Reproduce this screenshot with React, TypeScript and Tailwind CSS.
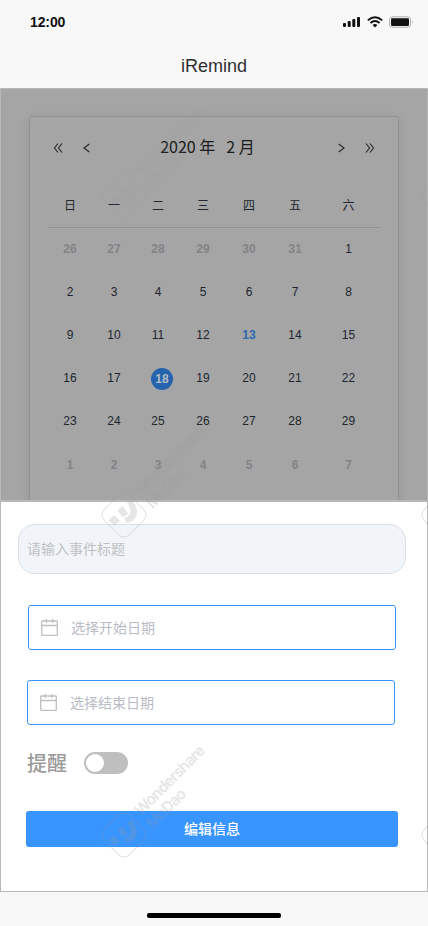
import React from "react";

const font = "font-['Liberation_Sans','Noto_Sans_CJK_SC',sans-serif]";

const weekdays = ["日", "一", "二", "三", "四", "五", "六"];
const weeks = [
  [26, 27, 28, 29, 30, 31, 1],
  [2, 3, 4, 5, 6, 7, 8],
  [9, 10, 11, 12, 13, 14, 15],
  [16, 17, 18, 19, 20, 21, 22],
  [23, 24, 25, 26, 27, 28, 29],
  [1, 2, 3, 4, 5, 6, 7],
];

function StatusBar() {
  return (
    <div className="flex h-11 items-center justify-between pr-[14px] pl-[30px] text-[#111]">
      <span className="text-sm leading-none font-bold tracking-[-0.1px]">12:00</span>
      <svg width="71" height="12" viewBox="0 0 71 12" fill="#111">
        <rect x="0" y="7" width="3" height="4" rx="1" />
        <rect x="4.7" y="5" width="3" height="6" rx="1" />
        <rect x="9.3" y="3" width="3" height="8" rx="1" />
        <rect x="14" y="1" width="3" height="10" rx="1" />
        <g fill="none" stroke="#111" strokeWidth="1.8">
          <path d="M24.8 4.4Q32 -2 39.2 4.4" />
          <path d="M27.4 7Q32 3 36.6 7" />
        </g>
        <path d="M29.6 9Q32 7.2 34.4 9L32 11.4Z" />
        <rect x="46.5" y="0.9" width="21" height="10.4" rx="2.5" fill="none" stroke="#b0b0b0" />
        <rect x="48" y="2.3" width="18" height="7.6" rx="1.2" />
        <path d="M69 4.5Q70.5 6 69 7.8Z" fill="#999" />
      </svg>
    </div>
  );
}

function Chevron({ double = false, flip = false }: { double?: boolean; flip?: boolean }) {
  return (
    <svg
      width="10"
      height="10"
      viewBox="0 0 10 10"
      className={flip ? "-scale-x-100" : ""}
      fill="none"
      stroke="#28292b"
      strokeWidth="1.15"
    >
      {double ? <path d="M5 .5L1.5 5L5 9.5M9 .5L5.500 5L9 9.5" /> : <path d="M7.3 1L2 5L7.3 9" />}
    </svg>
  );
}

function dayClass(week: number, day: number) {
  if ((week === 0 && day > 20) || week === 5) return "text-[#828387] font-bold";
  if (week === 2 && day === 13) return "text-[#2c69ae] font-bold";
  return "text-[#20252e]";
}

function Calendar() {
  return (
    <div className="mx-[28px] mt-[27px] h-[400px] rounded-[3px] border border-[#919295] px-[18px] shadow-[0_2px_10px_rgba(0,0,0,0.1)]">
      <div className="flex h-[61px] items-center pr-[5px] pl-[5px]">
        <Chevron double />
        <span className="ml-[19px] flex"><Chevron /></span>
        <div className="flex flex-1 justify-center gap-[11px] pr-[13px] pb-[3px] font-['Noto_Sans_CJK_SC',sans-serif] text-base text-[#1b1b1b]">
          <span>2020 年</span>
          <span>2 月</span>
        </div>
        <span className="mr-[19px] flex"><Chevron flip /></span>
        <Chevron double flip />
      </div>
      <div className="mt-[7px] mb-[-1px] grid h-[43px] grid-cols-[44px_44px_44px_46px_46px_46px_61px] items-center border-b border-[#919295] text-center text-xs text-[#20252e]">
        {weekdays.map((d) => <span key={d}>{d}</span>)}
      </div>
      {weeks.map((days, w) => (
        <div key={w} className="grid h-[43.2px] grid-cols-[44px_44px_44px_46px_46px_46px_61px] items-center text-center text-xs">
          {days.map((d) =>
            w === 3 && d === 18 ? (
              <span key={d} className="mt-[2px] ml-[15px] flex size-[22px] items-center justify-center rounded-full bg-[#2563ac] font-bold text-[#b5bcc6]">18</span>
            ) : (
              <span key={d} className={dayClass(w, d)}>{d}</span>
            ),
          )}
        </div>
      ))}
    </div>
  );
}

function DateField({ text }: { text: string }) {
  return (
    <div className="flex h-[45px] w-[368px] items-center rounded-[3px] border border-[#3894ff] pl-3 text-sm text-[#b9bcc5]">
      <svg width="17" height="17" viewBox="0 0 17 17" fill="none" stroke="#c0c0c0" strokeWidth="1.3">
        <rect x="0.7" y="2" width="15.6" height="14.3" rx="0.6" />
        <path d="M1 6.5H16M5.3 0V4M11.7 0V4" />
      </svg>
      <span className="ml-[13px]">{text}</span>
    </div>
  );
}

function Watermark({ label = true }: { label?: boolean }) {
  return (
    <svg width="112" height="124" viewBox="0 0 112 124" className="overflow-visible">
      <g opacity="0.24" fill="#999">
        <rect x="8.2" y="77.2" width="35.6" height="35.6" rx="8" fill="none" stroke="#999" strokeWidth="1.1" transform="rotate(45 26 95)" />
        <path d="M10.5 100.5L16 95L22 101L16.500 105.5Z M19.5 90.5L24.5 86L30 93.5L25 97.5Z M29 82L34 80Q39.5 87 39 93Q38 102 28 103L26.500 98Q37 95 29 82Z" />
        {label && (
          <g fontSize="15.5" fontWeight="600" fontFamily="Inter, sans-serif">
            <text transform="translate(43 76.5) rotate(-45)" textLength="92">Wondershare</text>
            <text transform="translate(54.5 89.5) rotate(-45)" textLength="49">MoDao</text>
          </g>
        )}
      </g>
    </svg>
  );
}

export default function App() {
  return (
    <div className={`relative flex h-[926px] w-full flex-col overflow-hidden bg-[#f8f8f8] ${font}`}>
      <StatusBar />
      <h1 className="flex h-11 items-center justify-center text-lg text-[#303030]">iRemind</h1>
      <section className="h-[413px] overflow-hidden border border-[#b8b8b8] bg-[#a5a5a5]">
        <Calendar />
      </section>
      <section className="h-[391px] border border-[#b8b8b8] bg-white">
        <div className="mt-[22px] ml-[17px] flex h-[50px] w-[388px] items-center rounded-[17px] border border-[#d9dfe8] bg-[#f1f5f9] pl-2 text-sm text-[#bfc0c3]">
          请输入事件标题
        </div>
        <div className="mt-[31px] ml-[27px]"><DateField text="选择开始日期" /></div>
        <div className="mt-[30px] ml-[26px]"><DateField text="选择结束日期" /></div>
        <div className="mt-[23px] ml-[26px] flex h-[30px] items-center text-xl text-[#9b9b9b]">
          <span className="pt-0.5 font-medium">提醒</span>
          <span className="ml-[17px] flex h-[22px] w-11 items-center rounded-full bg-[#bfbfbf] pl-0.5">
            <span className="size-[18px] rounded-full bg-white" />
          </span>
        </div>
        <button className="mt-[33px] ml-[25px] flex h-9 w-[372px] items-center justify-center rounded-[3px] bg-[#3894ff] text-sm font-medium text-white">
          编辑信息
        </button>
      </section>
      <footer className="flex flex-1 justify-center pt-[21px]">
        <div className="h-[5px] w-[134px] rounded-[2px] bg-black" />
      </footer>
      <div className="pointer-events-none absolute top-[100px] left-[98px] opacity-50"><Watermark /></div>
      <div className="pointer-events-none absolute top-[420px] left-[98px]"><Watermark /></div>
      <div className="pointer-events-none absolute top-[740px] left-[98px]"><Watermark /></div>
      <div className="pointer-events-none absolute top-[100px] left-[418px] opacity-50"><Watermark label={false} /></div>
      <div className="pointer-events-none absolute top-[420px] left-[418px]"><Watermark label={false} /></div>
      <div className="pointer-events-none absolute top-[740px] left-[418px]"><Watermark label={false} /></div>
    </div>
  );
}
